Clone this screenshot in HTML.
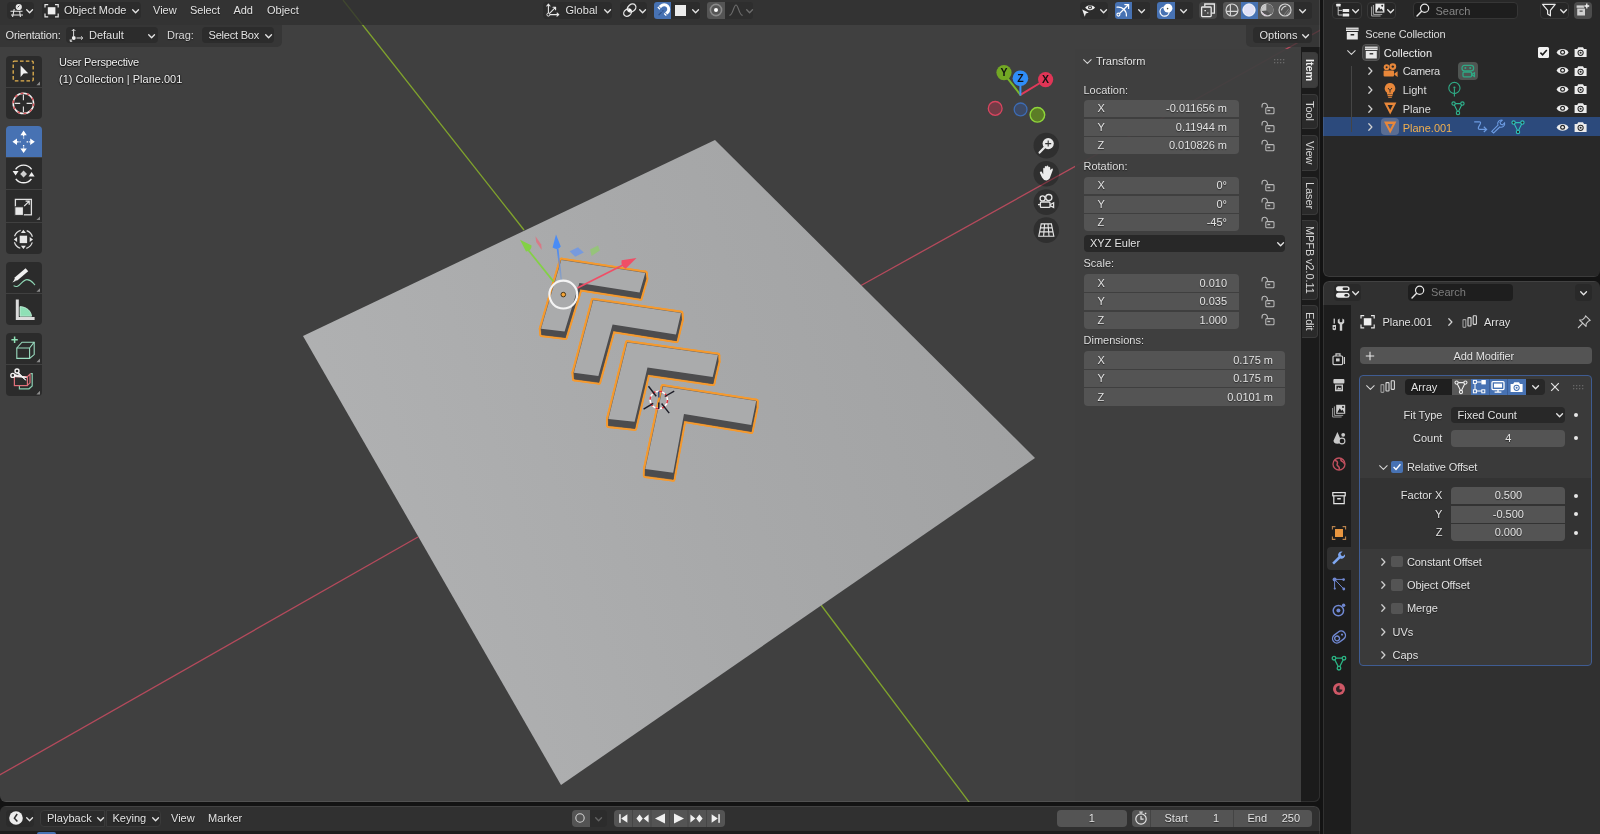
<!DOCTYPE html>
<html><head><meta charset="utf-8"><title>Blender</title>
<style>
*{box-sizing:border-box}
html,body{margin:0;padding:0}
body{width:1600px;height:834px;background:#131313;overflow:hidden;position:relative;font:11px "Liberation Sans",sans-serif;color:#e2e2e2}
.abs{position:absolute}
#vp,#tl,#ol,#pr{will-change:transform}
.t{position:absolute;white-space:nowrap;line-height:14px;height:14px}
.btn{position:absolute;background:#2a2a2a;border-radius:4px}
.fld{position:absolute;background:#545454}
.sh{text-shadow:0 1px 1px rgba(0,0,0,.55)}
svg{position:absolute;overflow:visible}
#vp{left:0;top:0;width:1320px;height:802px;background:#404040;border-radius:0 0 6px 6px;overflow:hidden}
.edge{position:absolute;left:0;top:0;right:0;bottom:0;border-radius:inherit;box-shadow:inset 0 0 0 1px rgba(255,255,255,.09);pointer-events:none}
#tl{left:0;top:806px;width:1320px;height:28px;background:#303030;border-radius:6px 6px 0 0;overflow:hidden}
#ol{left:1323px;top:0;width:277px;height:277px;background:#282828;border-radius:0 0 6px 6px;overflow:hidden}
#pr{left:1323px;top:281px;width:277px;height:553px;background:#303030;border-radius:6px 6px 0 0;overflow:hidden}
</style></head>
<body>
<!-- ================= 3D VIEWPORT ================= -->
<div id="vp" class="abs">
<svg width="1320" height="801" viewBox="0 0 1320 801" style="left:0;top:0">
<defs><linearGradient id="pg" x1="330" y1="520" x2="1000" y2="300" gradientUnits="userSpaceOnUse"><stop offset="0" stop-color="#b0b1b2"/><stop offset="0.5" stop-color="#a8a9aa"/><stop offset="1" stop-color="#a1a2a3"/></linearGradient></defs>
<g stroke-width="1.3" fill="none">
<line x1="343" y1="0" x2="524" y2="230" stroke="#80a42c"/>
<line x1="821" y1="605" x2="972" y2="806" stroke="#80a42c"/>
<line x1="-2" y1="776" x2="418" y2="537" stroke="#b54a5c"/>
<line x1="861" y1="285.5" x2="1325" y2="27.5" stroke="#b54a5c"/>
</g>
<polygon points="715,140 1035,458 561,785 303,336" fill="url(#pg)"/>
<g fill="#f59a2f" stroke="#f59a2f" stroke-width="4.6" stroke-linejoin="round">
<polygon points="561.3,260.0 645.3,272.9 639.6,292.4 579.4,283.0 564.6,331.6 541.1,328.8"/><polygon points="562.0,265.9 646.0,278.8 640.3,298.3 580.1,288.9 565.3,337.5 541.8,334.7"/>
<polygon points="561.3,260.0 645.3,272.9 646.0,278.8 562.0,265.9"/>
<polygon points="645.3,272.9 639.6,292.4 640.3,298.3 646.0,278.8"/>
<polygon points="639.6,292.4 579.4,283.0 580.1,288.9 640.3,298.3"/>
<polygon points="579.4,283.0 564.6,331.6 565.3,337.5 580.1,288.9"/>
<polygon points="564.6,331.6 541.1,328.8 541.8,334.7 565.3,337.5"/>
<polygon points="541.1,328.8 561.3,260.0 562.0,265.9 541.8,334.7"/>
</g>
<g fill="#4c4c4e" stroke="#4c4c4e" stroke-width="0.4">
<polygon points="562.0,265.9 646.0,278.8 640.3,298.3 580.1,288.9 565.3,337.5 541.8,334.7"/>
<polygon points="561.3,260.0 645.3,272.9 646.0,278.8 562.0,265.9"/>
<polygon points="645.3,272.9 639.6,292.4 640.3,298.3 646.0,278.8"/>
<polygon points="639.6,292.4 579.4,283.0 580.1,288.9 640.3,298.3"/>
<polygon points="579.4,283.0 564.6,331.6 565.3,337.5 580.1,288.9"/>
<polygon points="564.6,331.6 541.1,328.8 541.8,334.7 565.3,337.5"/>
<polygon points="541.1,328.8 561.3,260.0 562.0,265.9 541.8,334.7"/>
</g>
<polygon points="561.3,260.0 645.3,272.9 639.6,292.4 579.4,283.0 564.6,331.6 541.1,328.8" fill="#aaabac"/>
<g fill="#f59a2f" stroke="#f59a2f" stroke-width="4.6" stroke-linejoin="round">
<polygon points="593.2,300.2 681.0,313.1 676.0,334.4 612.6,324.4 598.4,376.0 573.9,372.7"/><polygon points="593.7,306.5 681.5,319.4 676.4,340.7 613.1,330.7 598.8,382.3 574.4,379.0"/>
<polygon points="593.2,300.2 681.0,313.1 681.5,319.4 593.7,306.5"/>
<polygon points="681.0,313.1 676.0,334.4 676.4,340.7 681.5,319.4"/>
<polygon points="676.0,334.4 612.6,324.4 613.1,330.7 676.4,340.7"/>
<polygon points="612.6,324.4 598.4,376.0 598.8,382.3 613.1,330.7"/>
<polygon points="598.4,376.0 573.9,372.7 574.4,379.0 598.8,382.3"/>
<polygon points="573.9,372.7 593.2,300.2 593.7,306.5 574.4,379.0"/>
</g>
<g fill="#4c4c4e" stroke="#4c4c4e" stroke-width="0.4">
<polygon points="593.7,306.5 681.5,319.4 676.4,340.7 613.1,330.7 598.8,382.3 574.4,379.0"/>
<polygon points="593.2,300.2 681.0,313.1 681.5,319.4 593.7,306.5"/>
<polygon points="681.0,313.1 676.0,334.4 676.4,340.7 681.5,319.4"/>
<polygon points="676.0,334.4 612.6,324.4 613.1,330.7 676.4,340.7"/>
<polygon points="612.6,324.4 598.4,376.0 598.8,382.3 613.1,330.7"/>
<polygon points="598.4,376.0 573.9,372.7 574.4,379.0 598.8,382.3"/>
<polygon points="573.9,372.7 593.2,300.2 593.7,306.5 574.4,379.0"/>
</g>
<polygon points="593.2,300.2 681.0,313.1 676.0,334.4 612.6,324.4 598.4,376.0 573.9,372.7" fill="#aaabac"/>
<g fill="#f59a2f" stroke="#f59a2f" stroke-width="4.6" stroke-linejoin="round">
<polygon points="627.4,342.6 717.9,355.0 712.7,377.0 647.5,367.6 634.6,421.7 608.4,418.9"/><polygon points="627.6,349.3 718.1,361.7 712.9,383.7 647.7,374.3 634.8,428.4 608.6,425.6"/>
<polygon points="627.4,342.6 717.9,355.0 718.1,361.7 627.6,349.3"/>
<polygon points="717.9,355.0 712.7,377.0 712.9,383.7 718.1,361.7"/>
<polygon points="712.7,377.0 647.5,367.6 647.7,374.3 712.9,383.7"/>
<polygon points="647.5,367.6 634.6,421.7 634.8,428.4 647.7,374.3"/>
<polygon points="634.6,421.7 608.4,418.9 608.6,425.6 634.8,428.4"/>
<polygon points="608.4,418.9 627.4,342.6 627.6,349.3 608.6,425.6"/>
</g>
<g fill="#4c4c4e" stroke="#4c4c4e" stroke-width="0.4">
<polygon points="627.6,349.3 718.1,361.7 712.9,383.7 647.7,374.3 634.8,428.4 608.6,425.6"/>
<polygon points="627.4,342.6 717.9,355.0 718.1,361.7 627.6,349.3"/>
<polygon points="717.9,355.0 712.7,377.0 712.9,383.7 718.1,361.7"/>
<polygon points="712.7,377.0 647.5,367.6 647.7,374.3 712.9,383.7"/>
<polygon points="647.5,367.6 634.6,421.7 634.8,428.4 647.7,374.3"/>
<polygon points="634.6,421.7 608.4,418.9 608.6,425.6 634.8,428.4"/>
<polygon points="608.4,418.9 627.4,342.6 627.6,349.3 608.6,425.6"/>
</g>
<polygon points="627.4,342.6 717.9,355.0 712.7,377.0 647.5,367.6 634.6,421.7 608.4,418.9" fill="#aaabac"/>
<g fill="#f59a2f" stroke="#f59a2f" stroke-width="4.6" stroke-linejoin="round">
<polygon points="663.0,386.5 756.2,401.1 751.3,425.0 684.0,414.0 673.2,472.8 645.3,469.1"/><polygon points="662.9,393.0 756.1,407.6 751.2,431.5 683.9,420.5 673.1,479.3 645.2,475.6"/>
<polygon points="663.0,386.5 756.2,401.1 756.1,407.6 662.9,393.0"/>
<polygon points="756.2,401.1 751.3,425.0 751.2,431.5 756.1,407.6"/>
<polygon points="751.3,425.0 684.0,414.0 683.9,420.5 751.2,431.5"/>
<polygon points="684.0,414.0 673.2,472.8 673.1,479.3 683.9,420.5"/>
<polygon points="673.2,472.8 645.3,469.1 645.2,475.6 673.1,479.3"/>
<polygon points="645.3,469.1 663.0,386.5 662.9,393.0 645.2,475.6"/>
</g>
<g fill="#4c4c4e" stroke="#4c4c4e" stroke-width="0.4">
<polygon points="662.9,393.0 756.1,407.6 751.2,431.5 683.9,420.5 673.1,479.3 645.2,475.6"/>
<polygon points="663.0,386.5 756.2,401.1 756.1,407.6 662.9,393.0"/>
<polygon points="756.2,401.1 751.3,425.0 751.2,431.5 756.1,407.6"/>
<polygon points="751.3,425.0 684.0,414.0 683.9,420.5 751.2,431.5"/>
<polygon points="684.0,414.0 673.2,472.8 673.1,479.3 683.9,420.5"/>
<polygon points="673.2,472.8 645.3,469.1 645.2,475.6 673.1,479.3"/>
<polygon points="645.3,469.1 663.0,386.5 662.9,393.0 645.2,475.6"/>
</g>
<polygon points="663.0,386.5 756.2,401.1 751.3,425.0 684.0,414.0 673.2,472.8 645.3,469.1" fill="#aaabac"/>
<g transform="translate(658.8,399.9)">
<circle r="8.7" fill="none" stroke="#fff" stroke-width="1.6"/>
<circle r="8.7" fill="none" stroke="#e0323c" stroke-width="1.6" stroke-dasharray="3.4 3.4"/>
<g stroke="#1c1c26" stroke-width="1.4">
<line x1="-10.3" y1="-13.6" x2="-2.6" y2="-3.6"/><line x1="2.8" y1="3.6" x2="10.4" y2="13.2"/>
<line x1="-15.2" y1="9.2" x2="-5.6" y2="3.4"/><line x1="6" y1="-3.4" x2="15.4" y2="-8.8"/>
<line x1="0" y1="-8.4" x2="0" y2="-2.4" stroke="#2a4a8a"/><line x1="0" y1="2.6" x2="0" y2="9.2"/>
</g></g>
<g>
<defs><linearGradient id="zb" x1="0" y1="280" x2="0" y2="250" gradientUnits="userSpaceOnUse"><stop offset="0" stop-color="#4d8af0" stop-opacity="0.25"/><stop offset="1" stop-color="#4d8af0" stop-opacity="1"/></linearGradient></defs>
<line x1="561.4" y1="281" x2="557.6" y2="249" stroke="url(#zb)" stroke-width="1.7"/>
<path d="M556.0,234.6 L560.8,246.5 Q557.5,251 552.6,247.6 Z" fill="#4a8cf5"/>
<line x1="553.6" y1="281.6" x2="527" y2="248.5" stroke="#83d145" stroke-width="1.7"/>
<path d="M520.0,239.8 L531.6,245.6 Q531.5,251 526.0,251.6 Z" fill="#83d145"/>
<line x1="577.4" y1="288" x2="625" y2="264" stroke="#f04e66" stroke-width="1.7"/>
<path d="M636.5,258.0 L625.6,268.8 Q620.5,266 621.6,260.2 Z" fill="#f04e66"/>
<path d="M535.5,236.2 L541.2,244.5 L541.8,250 L536.2,242 Z" fill="#e0717f" opacity="0.85"/>
<path d="M569.6,251.2 L578.0,247.2 L583.8,252.4 L575.2,256.8 Z" fill="#6f98e6" opacity="0.85"/>
<path d="M590.0,249.6 L598.0,245.4 L599.8,250.6 L591.6,256.0 Z" fill="#93c872" opacity="0.85"/>
<circle cx="563.3" cy="294.6" r="13.9" fill="none" stroke="#f4f4f4" stroke-width="2.2"/>
<circle cx="563.3" cy="294.6" r="2.3" fill="#f5a436" stroke="#3a2a10" stroke-width="0.9"/>
</g>
</svg>
<svg width="0" height="0" style="left:0;top:0"><defs>
<path id="chv" d="M0.7,0.8 L3.6,3.7 L6.5,0.8" fill="none" stroke="#e4e4e4" stroke-width="1.35" stroke-linecap="round" stroke-linejoin="round"/>
<path id="chr" d="M0.8,0.7 L3.9,4 L0.8,7.3" fill="none" stroke="#d0d0d0" stroke-width="1.25" stroke-linecap="round" stroke-linejoin="round"/>
<path id="chvt" d="M0.6,0.7 L4.4,4.4 L8.2,0.7" fill="none" stroke="#d8d8d8" stroke-width="1.05" stroke-linecap="round" stroke-linejoin="round"/>
</defs></svg>
<!-- header row 1 -->
<div class="abs" style="left:0;top:0;width:1320px;height:24.5px;background:rgba(47,47,47,.8)"></div>
<!-- tool settings row backgrounds -->
<div class="abs" style="left:0;top:24.5px;width:282px;height:22px;background:rgba(50,50,50,.72);border-radius:0 0 5px 0"></div>
<div class="abs" style="left:1246px;top:24.5px;width:74px;height:22px;background:rgba(50,50,50,.72);border-radius:0 0 0 5px"></div>

<!-- editor type -->
<div class="btn" style="left:7px;top:2px;width:26.5px;height:16.5px;background:#2c2c2c"></div>
<svg width="16" height="16" viewBox="0 0 16 16" style="left:9px;top:2px"><g fill="none" stroke="#e6e6e6" stroke-width="1.1"><path d="M1.5,9.2 H13.5 M2,13 H14 M5.2,7 L3.6,15 M10.6,9 L11.4,15"/></g><circle cx="9.8" cy="5" r="3.1" fill="#e6e6e6"/><path d="M8.6,5.4 L10.4,3.6" stroke="#333" stroke-width="0.9"/></svg>
<svg width="8" height="5" style="left:26px;top:8.5px"><use href="#chv"/></svg>

<!-- object mode -->
<div class="btn" style="left:42px;top:2px;width:98.5px;height:16.5px;background:#2c2c2c"></div>
<svg width="16" height="16" viewBox="0 0 16 16" style="left:43.5px;top:2.5px"><g fill="none" stroke="#e6e6e6" stroke-width="1.2"><path d="M1,4.6 V1.6 H4.2 M11,1.6 H14.2 V4.6 M14.2,10.6 V13.8 H11 M4.2,13.8 H1 V10.6"/></g><rect x="3.8" y="4.2" width="7.6" height="7.2" fill="#efefef"/></svg>
<div class="t sh" style="left:64px;top:3.4px">Object Mode</div>
<svg width="8" height="5" style="left:131.5px;top:8.5px"><use href="#chv"/></svg>

<div class="t sh" style="left:153px;top:3.4px">View</div>
<div class="t sh" style="left:190px;top:3.4px;letter-spacing:-.1px">Select</div>
<div class="t sh" style="left:233.5px;top:3.4px;letter-spacing:-.15px">Add</div>
<div class="t sh" style="left:267px;top:3.4px">Object</div>

<!-- row 2 -->
<div class="t sh" style="left:5.5px;top:28px;letter-spacing:-.15px">Orientation:</div>
<div class="btn" style="left:66px;top:27px;width:91.5px;height:16px;background:#2c2c2c"></div>
<svg width="16" height="16" viewBox="0 0 16 16" style="left:68.5px;top:27px"><g fill="none" stroke="#d8d8d8" stroke-width="1"><path d="M4.6,9 V2.4 M2.8,4 L4.6,2.2 L6.4,4 M7.5,11 H13.6 M12,9.3 L13.8,11 L12,12.7 M3,12.6 L1.2,14.2 M1.2,12.4 V14.3 H3.2"/></g><circle cx="4.8" cy="11" r="1.9" fill="#f0f0f0"/></svg>
<div class="t sh" style="left:89px;top:28px">Default</div>
<svg width="8" height="5" style="left:148px;top:33.5px"><use href="#chv"/></svg>
<div class="t sh" style="left:167px;top:28px;color:#d8d8d8">Drag:</div>
<div class="btn" style="left:202px;top:27px;width:71.5px;height:16px;background:#2c2c2c"></div>
<div class="t sh" style="left:208.5px;top:28px;letter-spacing:-.2px">Select Box</div>
<svg width="8" height="5" style="left:265px;top:33.5px"><use href="#chv"/></svg>

<!-- center: global -->
<div class="btn" style="left:543px;top:2px;width:69px;height:16.5px;background:#2c2c2c"></div>
<svg width="16" height="16" viewBox="0 0 16 16" style="left:545px;top:2px"><g fill="none" stroke="#e6e6e6" stroke-width="1.1" stroke-linecap="round" stroke-linejoin="round"><path d="M3.4,12.6 V2.4 M1.8,4 L3.4,2.2 L5,4 M3.4,12.6 H13.6 M12,11 L13.8,12.6 L12,14.2 M3.6,12.4 L10.4,5.4 M8,5.2 H10.6 V7.8"/></g><circle cx="3.4" cy="12.6" r="1.5" fill="#2c2c2c" stroke="#e6e6e6" stroke-width="1"/></svg>
<div class="t sh" style="left:565.5px;top:3.4px;letter-spacing:.05px">Global</div>
<svg width="8" height="5" style="left:604px;top:8.5px"><use href="#chv"/></svg>
<!-- pivot -->
<div class="btn" style="left:619.5px;top:2px;width:27.5px;height:16.5px;background:#2c2c2c"></div>
<svg width="16" height="16" viewBox="0 0 16 16" style="left:621.5px;top:2px"><g fill="none" stroke="#e6e6e6" stroke-width="1.3"><ellipse cx="9.6" cy="6" rx="4.6" ry="3.6" transform="rotate(-38 9.6 6)"/><ellipse cx="5.6" cy="10.6" rx="4.2" ry="3.3" transform="rotate(-38 5.6 10.6)"/></g><circle cx="7.6" cy="8.2" r="1.5" fill="#fff"/></svg>
<svg width="8" height="5" style="left:639px;top:8.5px"><use href="#chv"/></svg>
<!-- snap -->
<div class="abs" style="left:654px;top:2px;width:17px;height:16.5px;background:#4772b3;border-radius:3px 0 0 3px"></div>
<svg width="16" height="16" viewBox="0 0 16 16" style="left:654.5px;top:2.3px"><path d="M3.4,6.6 L6,4 A4.5,4.5 0 0 1 12.4,4 A4.5,4.5 0 0 1 12.4,10.4 L9.8,13" fill="none" stroke="#fff" stroke-width="3"/><path d="M3.3,4 L6,6.7 M9.7,10.4 L12.4,13.1" stroke="#4772b3" stroke-width="1"/><path d="M6.6,10.2 L3.6,13.2 M8.4,8.4 L7.4,9.4" stroke="#2d4f86" stroke-width="1.2"/></svg>
<div class="abs" style="left:671px;top:2px;width:29px;height:16.5px;background:#2c2c2c;border-radius:0 3px 3px 0"></div>
<div class="abs" style="left:675px;top:5px;width:11px;height:11px;background:#ececec"></div>
<svg width="8" height="5" style="left:691.5px;top:8.5px"><use href="#chv"/></svg>
<!-- proportional -->
<div class="abs" style="left:707px;top:2px;width:18px;height:16.5px;background:#555;border-radius:3px 0 0 3px"></div>
<svg width="16" height="16" viewBox="0 0 16 16" style="left:708px;top:2.2px"><circle cx="8" cy="8" r="5.6" fill="none" stroke="#8a8a8a" stroke-width="1.6"/><circle cx="8" cy="8" r="2" fill="#fff"/></svg>
<div class="abs" style="left:725px;top:2px;width:28px;height:16.5px;background:#2e2e2e;border-radius:0 3px 3px 0"></div>
<svg width="16" height="16" viewBox="0 0 16 16" style="left:727.5px;top:2px"><path d="M1.4,13.4 C5,13.4 5.6,3 8,3 C10.4,3 11,13.4 14.6,13.4" fill="none" stroke="#6c6c6c" stroke-width="1.2"/></svg>
<svg width="8" height="5" style="left:745.5px;top:8.5px;opacity:.35"><use href="#chv"/></svg>

<!-- right: visibility -->
<div class="btn" style="left:1080px;top:2px;width:28px;height:16.5px;background:#2c2c2c"></div>
<svg width="16" height="16" viewBox="0 0 16 16" style="left:1081px;top:2px"><path d="M4.2,5.8 C6,2.6 11,2.2 14,5.6 C11.4,9 7.4,9.4 4.2,5.8 Z" fill="#f0f0f0"/><circle cx="9" cy="5.4" r="1.9" fill="#2c2c2c"/><circle cx="9" cy="5.4" r="0.9" fill="#f0f0f0"/><path d="M1.2,7.6 L7.8,10.6 L4.8,11.6 L3.8,14.8 Z" fill="#f0f0f0"/></svg>
<svg width="8" height="5" style="left:1099.5px;top:8.5px"><use href="#chv"/></svg>
<!-- gizmo -->
<div class="abs" style="left:1114.5px;top:2px;width:17.5px;height:16.5px;background:#4772b3;border-radius:3px 0 0 3px"></div>
<svg width="16" height="16" viewBox="0 0 16 16" style="left:1115px;top:2.2px"><g fill="none" stroke="#fff" stroke-width="1.2" stroke-linecap="round"><path d="M3.8,12.2 L13.4,2.8 M9.8,2.6 H13.6 V6.4"/><path d="M2,5.2 C7.2,4.4 11.8,8.4 11.4,14"/></g><circle cx="3.4" cy="12.6" r="1.5" fill="#4772b3" stroke="#fff" stroke-width="1.1"/></svg>
<div class="abs" style="left:1132px;top:2px;width:18px;height:16.5px;background:#2c2c2c;border-radius:0 3px 3px 0"></div>
<svg width="8" height="5" style="left:1137.5px;top:8.5px"><use href="#chv"/></svg>
<!-- overlay -->
<div class="abs" style="left:1157px;top:2px;width:17.5px;height:16.5px;background:#4772b3;border-radius:3px 0 0 3px"></div>
<svg width="16" height="16" viewBox="0 0 16 16" style="left:1157.5px;top:2.2px"><circle cx="6.6" cy="9.6" r="4.6" fill="none" stroke="#fff" stroke-width="1.2"/><circle cx="10" cy="6.2" r="4.4" fill="#fff"/><circle cx="9.6" cy="6.6" r="0.8" fill="#4a4a3a"/></svg>
<div class="abs" style="left:1174.5px;top:2px;width:18px;height:16.5px;background:#2c2c2c;border-radius:0 3px 3px 0"></div>
<svg width="8" height="5" style="left:1180px;top:8.5px"><use href="#chv"/></svg>
<!-- xray -->
<div class="btn" style="left:1199px;top:2px;width:17.5px;height:16.5px;background:#484848"></div>
<svg width="16" height="16" viewBox="0 0 16 16" style="left:1199.8px;top:2.2px"><g fill="none" stroke="#e8e8e8" stroke-width="1.3"><rect x="1.6" y="5" width="9.6" height="9.6" rx="0.8"/><path d="M4.8,4.6 V2 H14.4 V11.2 H11.6"/></g><path d="M4.4,8 h1.6 v1.2 h-1.6z M7,10.4 h1.6 v1.2 H7z" fill="#ddd"/></svg>
<!-- shading -->
<div class="abs" style="left:1223px;top:2px;width:17.5px;height:16.5px;background:#555;border-radius:3px 0 0 3px"></div>
<svg width="16" height="16" viewBox="0 0 16 16" style="left:1223.8px;top:2.2px"><g fill="none" stroke="#d6d6d6" stroke-width="1.15"><circle cx="8" cy="8" r="6"/><path d="M2.2,9.4 H13.8 M6.4,2.4 V13.6"/></g></svg>
<div class="abs" style="left:1240.5px;top:2px;width:17.5px;height:16.5px;background:#4772b3"></div>
<svg width="16" height="16" viewBox="0 0 16 16" style="left:1241.3px;top:2.2px"><circle cx="8" cy="8" r="6.1" fill="#dfe0f6" stroke="#fff" stroke-width="1"/></svg>
<div class="abs" style="left:1258px;top:2px;width:18px;height:16.5px;background:#555"></div>
<svg width="16" height="16" viewBox="0 0 16 16" style="left:1259px;top:2.2px"><circle cx="8" cy="8" r="6" fill="none" stroke="#d6d6d6" stroke-width="1.15"/><path d="M7.4,2 V8.6 L12.4,12.4 A6,6 0 0 0 7.4,2 Z" fill="#6a6a6a"/><path d="M2.2,9 Q5,12.6 9,13.6 Q4,14.6 2.2,9 Z" fill="#e0d0e0"/><path d="M7.4,2.4 V8.4 L2.6,9 A6,6 0 0 1 7.4,2.4Z" fill="#dcdcdc" opacity=".85"/></svg>
<div class="abs" style="left:1276px;top:2px;width:17.5px;height:16.5px;background:#555;border-radius:0"></div>
<svg width="16" height="16" viewBox="0 0 16 16" style="left:1276.6px;top:2.2px"><circle cx="8" cy="8" r="6" fill="none" stroke="#d6d6d6" stroke-width="1.15"/><path d="M4.4,8.4 Q5.4,4.6 9.4,4" fill="none" stroke="#d6d6d6" stroke-width="1.2"/><path d="M9,13.4 L13,8.2 M6.8,13.2 L12,6.6 M11,12.4 L13.4,9.6" stroke="#909090" stroke-width=".7"/></svg>
<div class="abs" style="left:1293.5px;top:2px;width:18.5px;height:16.5px;background:#2c2c2c;border-radius:0 3px 3px 0"></div>
<svg width="8" height="5" style="left:1299px;top:8.5px"><use href="#chv"/></svg>

<!-- options -->
<div class="btn" style="left:1253px;top:27px;width:58.5px;height:16px;background:#2c2c2c"></div>
<div class="t sh" style="left:1259.5px;top:28px">Options</div>
<svg width="8" height="5" style="left:1301.5px;top:33.5px"><use href="#chv"/></svg>

<!-- viewport text -->
<div class="t" style="left:59px;top:54.8px;text-shadow:0 0 2px rgba(0,0,0,.8),0 1px 1px rgba(0,0,0,.6);letter-spacing:-.25px;color:#f0f0f0">User Perspective</div>
<div class="t" style="left:59px;top:71.8px;text-shadow:0 0 2px rgba(0,0,0,.8),0 1px 1px rgba(0,0,0,.6);color:#f0f0f0">(1) Collection | Plane.001</div>

<!-- toolbar buttons -->
<div class="abs" style="left:6px;top:55.5px;width:35.5px;height:31.3px;background:#2b2b2b;border-radius:4px 4px 0 0"></div>
<div class="abs" style="left:6px;top:87.7px;width:35.5px;height:31.3px;background:#2b2b2b;border-radius:0 0 4px 4px"></div>
<div class="abs" style="left:6px;top:126px;width:35.5px;height:31.3px;background:#4772b3;border-radius:4px 4px 0 0"></div>
<div class="abs" style="left:6px;top:158.1px;width:35.5px;height:31.3px;background:#2b2b2b"></div>
<div class="abs" style="left:6px;top:190.3px;width:35.5px;height:31.3px;background:#2b2b2b"></div>
<div class="abs" style="left:6px;top:222.5px;width:35.5px;height:31.8px;background:#2b2b2b;border-radius:0 0 4px 4px"></div>
<div class="abs" style="left:6px;top:262px;width:35.5px;height:31.3px;background:#2b2b2b;border-radius:4px 4px 0 0"></div>
<div class="abs" style="left:6px;top:294.2px;width:35.5px;height:31.3px;background:#2b2b2b;border-radius:0 0 4px 4px"></div>
<div class="abs" style="left:6px;top:332.5px;width:35.5px;height:31.3px;background:#2b2b2b;border-radius:4px 4px 0 0"></div>
<div class="abs" style="left:6px;top:364.7px;width:35.5px;height:31.3px;background:#2b2b2b;border-radius:0 0 4px 4px"></div>
<svg width="42" height="400" viewBox="0 0 42 400" style="left:0;top:0">
<!-- corner triangles -->
<g fill="#8c8c8c"><path d="M40,81.6 v3.6 h-3.6z M40,216.4 v3.6 h-3.6z M40,288.2 v3.6 h-3.6z M40,358.6 v3.6 h-3.6z M40,390.8 v3.6 h-3.6z"/></g>
<!-- select box -->
<rect x="13.2" y="61.2" width="20" height="19.6" rx="1" fill="none" stroke="#e6b450" stroke-width="1.3" stroke-dasharray="3.6 2.2"/>
<path d="M20.6,65.6 L28.2,73.2 L23.6,73.4 L20.6,77 Z" fill="#f0f0f0"/>
<!-- cursor -->
<circle cx="23.4" cy="103.4" r="10.2" fill="none" stroke="#f2f2f2" stroke-width="1.5"/>
<circle cx="23.4" cy="103.4" r="10.2" fill="none" stroke="#d7545a" stroke-width="1.5" stroke-dasharray="3 3.4"/>
<path d="M23.4,94.6 v5.6 M23.4,106.6 v5.6 M14.6,103.4 h5.6 M26.6,103.4 h5.6" stroke="#e2e2e2" stroke-width="1.1"/>
<!-- move -->
<g fill="#fff"><path d="M23.6,130.6 l3.2,4.6 h-6.4z M23.6,153 l3.2,-4.6 h-6.4z M12.4,141.8 l4.6,-3.2 v6.4z M34.8,141.8 l-4.6,-3.2 v6.4z"/></g>
<path d="M23.6,135 v3.6 M23.6,145 v3.6 M17,141.8 h3.6 M26.6,141.8 h3.6" stroke="#fff" stroke-width="1.3" stroke-dasharray="1.6 1"/>
<!-- rotate -->
<g fill="none" stroke="#f0f0f0" stroke-width="1.4"><path d="M15.6,169.4 A9.6,9.6 0 0 1 31.6,169.4"/><path d="M31.4,178.8 A9.6,9.6 0 0 1 15.8,178.8"/></g>
<path d="M12.6,171 h6 l-3,4.6z M28.6,176.6 h6 l-3,-4.6z" fill="#f0f0f0"/>
<path d="M23.6,170.4 l3.4,3.6 l-3.4,3.6 l-3.4,-3.6z" fill="#cfcfcf"/>
<!-- scale -->
<rect x="15.4" y="199.4" width="16" height="15.4" fill="none" stroke="#e0e0e0" stroke-width="1.3"/>
<rect x="14.8" y="206.8" width="8.6" height="8.6" fill="#e8e8e8" stroke="#2b2b2b" stroke-width="1"/>
<path d="M24.2,206.2 L29,201.4 M25.6,201.2 h3.6 v3.6" fill="none" stroke="#e8e8e8" stroke-width="1.2"/>
<!-- transform -->
<circle cx="23.4" cy="239.4" r="9.4" fill="none" stroke="#dedede" stroke-width="1.2" stroke-dasharray="8.6 6.165" stroke-dashoffset="-3.08"/>
<rect x="19.7" y="235.7" width="7.4" height="7.4" fill="#e6e6e6"/>
<path d="M23.4,229.8 l2.5,3.3 h-5z M23.4,249 l2.5,-3.3 h-5z M13.8,239.4 l3.3,-2.5 v5z M33,239.4 l-3.3,-2.5 v5z" fill="#e6e6e6"/>
<!-- annotate -->
<path d="M14,281 L15,277.2 L25.6,268.2 L28.2,271.2 L17.6,280.2 Z" fill="#f0f0f0"/><path d="M12.4,282.4 L14.6,279.6 L15.6,281 Z" fill="#f0f0f0"/>
<path d="M13.6,285.6 C19,289.6 21.6,279.6 27,279.6 C31.6,279.6 33,283.2 35,285" fill="none" stroke="#8fd6b4" stroke-width="1.1"/>
<!-- measure -->
<path d="M15.8,299.4 h3 v17.6 h15.8 v3 h-18.8z" fill="#dcdcdc"/>
<path d="M20,316.2 V306.6 C26.4,306.8 31,310.8 31.6,316.2 Z" fill="#8fe0b6" stroke="#c8f0dc" stroke-width=".8"/>
<!-- add cube -->
<path d="M14.6,336.6 v6.4 M11.4,339.8 h6.4" stroke="#8fe0b6" stroke-width="1.5"/>
<g fill="none" stroke="#9adcc0" stroke-width="1.1"><path d="M16.8,348 L22,342.2 H34.2 V354.6 L29.6,358.4 H16.8 Z"/><path d="M16.8,348 H29.6 V358.4 M29.6,348 L34.2,342.2"/></g>
<!-- rip/shear -->
<g fill="none" stroke-width="1.2"><path d="M19.4,385.8 v3 h9.6 l3.2,-2.8 v-12.4 h-1.6" stroke="#8ccfb2"/><rect x="14.4" y="376.6" width="13" height="9" stroke="#e0707a"/><path d="M27.4,376.6 l2.6,-2.4 v8.6 l-2.6,2.6" stroke="#e0707a"/></g>
<g fill="none" stroke="#f4f4f4" stroke-width="1.4"><circle cx="12.8" cy="375.4" r="2"/><circle cx="17" cy="371" r="2"/></g>
<path d="M14.6,374.6 L26.6,377.4 L15.4,376.6 Z M18.4,372.4 L25.8,380.2 L17.6,373.4 Z" fill="#f4f4f4" stroke="#f4f4f4" stroke-width=".9" stroke-linejoin="round"/>
</svg>

<svg width="120" height="200" viewBox="960 50 120 200" style="left:960px;top:50px;font:bold 10.5px 'Liberation Sans',sans-serif">
<!-- negative axes -->
<circle cx="995.2" cy="108.4" r="6.9" fill="#743b46" stroke="#d8455f" stroke-width="1.3"/>
<circle cx="1020.6" cy="109.4" r="6.4" fill="#3c4a66" stroke="#3d6cb4" stroke-width="1.3"/>
<!-- axis lines -->
<g stroke-width="2" stroke-linecap="round"><line x1="1020.4" y1="94.8" x2="1040" y2="83" stroke="#e03a5a"/><line x1="1020.4" y1="94.8" x2="1007.4" y2="78.2" stroke="#79b52b"/><line x1="1020.4" y1="94.8" x2="1020.4" y2="84" stroke="#3c90f5"/></g>
<circle cx="1037.4" cy="114.8" r="7.3" fill="#5c7d26" stroke="#8fd63a" stroke-width="1.4"/>
<circle cx="1004" cy="72.6" r="7.6" fill="#72a724"/>
<circle cx="1045.6" cy="79.6" r="7.6" fill="#e03556"/>
<circle cx="1020.4" cy="78.2" r="7.8" fill="#2f8df8"/>
<g fill="#111" text-anchor="middle"><text x="1004" y="76.4">Y</text><text x="1045.6" y="83.4">X</text><text x="1020.4" y="82">Z</text></g>
<!-- nav buttons -->
<g fill="rgba(16,16,16,.34)"><circle cx="1046.3" cy="145.6" r="12.8"/><circle cx="1046.3" cy="173.8" r="12.8"/><circle cx="1046.3" cy="202.1" r="12.8"/><circle cx="1046.3" cy="230.1" r="12.8"/></g>
<!-- zoom -->
<circle cx="1048.2" cy="143.6" r="5.6" fill="#e8e8e8"/><path d="M1044.2,147.8 L1039.6,152.6" stroke="#e8e8e8" stroke-width="2.2" stroke-linecap="round"/><path d="M1048.2,140.6 v6 M1045.2,143.6 h6" stroke="#333" stroke-width="1.1"/>
<!-- hand -->
<path d="M1041.6,171.6 L1043.2,174.2 V168.4 Q1044,167.2 1044.8,168.4 V166.6 Q1045.8,165.4 1046.6,166.6 V166.2 Q1047.6,165 1048.4,166.2 V167.2 Q1049.4,166.2 1050.2,167.4 V170 L1052,168.6 Q1053.4,168.6 1052.8,170 L1050.4,176.6 Q1049.4,180.4 1046.4,180.4 Q1043.4,180.4 1042,177.6 L1039.8,172.8 Q1040.2,171 1041.6,171.6 Z" fill="#ececec"/>
<!-- camera -->
<g fill="none" stroke="#e4e4e4" stroke-width="1.3"><circle cx="1042.6" cy="198.4" r="2.5"/><circle cx="1048.8" cy="197.6" r="3.1"/><rect x="1040.4" y="202" width="9.6" height="5.4" rx="1"/><path d="M1050,204.8 l3.6,-2 v4.6 l-3.6,-1.8"/><path d="M1040.2,204.6 h-2.2"/></g>
<!-- grid -->
<g fill="none" stroke="#e4e4e4" stroke-width="1.15"><path d="M1041.2,223.8 H1051.4 L1053.8,236.2 H1038.8 Z M1044.6,223.8 L1043.6,236.2 M1048,223.8 L1049,236.2 M1040.4,227.8 H1052.2 M1039.6,231.8 H1053"/></g>
</svg>

<div class="abs" style="left:1074.5px;top:48.5px;width:227px;height:753px;background:rgba(63,63,63,.95)"></div>
<div class="abs" style="left:1301px;top:46.5px;width:19px;height:756px;background:#1b1b1b"></div>
<div class="abs" style="left:1301.5px;top:51.5px;width:16.5px;height:36.5px;background:#3d3d3d;border-radius:0 4px 4px 0;border:1px solid #3a3a3a;border-left:none"></div>
<div class="abs" style="left:1301.5px;top:51.5px;width:16.5px;height:36.5px;display:flex;align-items:center;justify-content:center"><span style="writing-mode:vertical-rl;white-space:nowrap;font-size:11px;line-height:16px;color:#f0f0f0;font-weight:bold;letter-spacing:-.1px">Item</span></div>
<div class="abs" style="left:1301.5px;top:94px;width:16.5px;height:34.5px;background:#2a2a2a;border-radius:0 4px 4px 0;border:1px solid #3a3a3a;border-left:none"></div>
<div class="abs" style="left:1301.5px;top:94px;width:16.5px;height:34.5px;display:flex;align-items:center;justify-content:center"><span style="writing-mode:vertical-rl;white-space:nowrap;font-size:11px;line-height:16px;color:#d6d6d6;font-weight:normal;letter-spacing:-.1px">Tool</span></div>
<div class="abs" style="left:1301.5px;top:134.5px;width:16.5px;height:36.5px;background:#2a2a2a;border-radius:0 4px 4px 0;border:1px solid #3a3a3a;border-left:none"></div>
<div class="abs" style="left:1301.5px;top:134.5px;width:16.5px;height:36.5px;display:flex;align-items:center;justify-content:center"><span style="writing-mode:vertical-rl;white-space:nowrap;font-size:11px;line-height:16px;color:#d6d6d6;font-weight:normal;letter-spacing:-.1px">View</span></div>
<div class="abs" style="left:1301.5px;top:176.5px;width:16.5px;height:38px;background:#2a2a2a;border-radius:0 4px 4px 0;border:1px solid #3a3a3a;border-left:none"></div>
<div class="abs" style="left:1301.5px;top:176.5px;width:16.5px;height:38px;display:flex;align-items:center;justify-content:center"><span style="writing-mode:vertical-rl;white-space:nowrap;font-size:11px;line-height:16px;color:#d6d6d6;font-weight:normal;letter-spacing:-.1px">Laser</span></div>
<div class="abs" style="left:1301.5px;top:220px;width:16.5px;height:80px;background:#2a2a2a;border-radius:0 4px 4px 0;border:1px solid #3a3a3a;border-left:none"></div>
<div class="abs" style="left:1301.5px;top:220px;width:16.5px;height:80px;display:flex;align-items:center;justify-content:center"><span style="writing-mode:vertical-rl;white-space:nowrap;font-size:11px;line-height:16px;color:#d6d6d6;font-weight:normal;letter-spacing:-.1px">MPFB v2.0.11</span></div>
<div class="abs" style="left:1301.5px;top:304.5px;width:16.5px;height:33px;background:#2a2a2a;border-radius:0 4px 4px 0;border:1px solid #3a3a3a;border-left:none"></div>
<div class="abs" style="left:1301.5px;top:304.5px;width:16.5px;height:33px;display:flex;align-items:center;justify-content:center"><span style="writing-mode:vertical-rl;white-space:nowrap;font-size:11px;line-height:16px;color:#d6d6d6;font-weight:normal;letter-spacing:-.1px">Edit</span></div>
<svg width="10" height="6" style="left:1083px;top:59.2px"><use href="#chvt"/></svg>
<div class="t sh" style="left:1096px;top:54.3px;letter-spacing:-.05px">Transform</div>
<svg width="12" height="6" viewBox="0 0 12 6" style="left:1273.5px;top:59px"><g fill="#6a6a6a"><rect x="0" y="0" width="1.3" height="1.3"/><rect x="3" y="0" width="1.3" height="1.3"/><rect x="6" y="0" width="1.3" height="1.3"/><rect x="9" y="0" width="1.3" height="1.3"/><rect x="0" y="3" width="1.3" height="1.3"/><rect x="3" y="3" width="1.3" height="1.3"/><rect x="6" y="3" width="1.3" height="1.3"/><rect x="9" y="3" width="1.3" height="1.3"/></g></svg>
<div class="t sh" style="left:1083.5px;top:82.6px;color:#dedede">Location:</div>
<div class="fld" style="left:1083.5px;top:100.00px;width:155.5px;height:17.4px;border-radius:4px 4px 0 0"></div>
<div class="t sh" style="left:1097.5px;top:101.20px">X</div>
<div class="t sh" style="right:93.0px;top:101.20px;text-align:right">-0.011656 m</div>
<svg width="16" height="14" viewBox="0 0 16 14" style="left:1259.5px;top:101.60px"><g fill="none" stroke="#bababa" stroke-width="1.05"><rect x="5.8" y="5.6" width="8.2" height="6.2" rx="1"/><path d="M7.4,5.4 V4 A2.7,2.7 0 0 0 2,4 V5.6"/></g><rect x="7.4" y="7.8" width="2.8" height="1.4" fill="#bdbdbd"/></svg>
<div class="fld" style="left:1083.5px;top:118.55px;width:155.5px;height:17.4px;border-radius:0"></div>
<div class="t sh" style="left:1097.5px;top:119.75px">Y</div>
<div class="t sh" style="right:93.0px;top:119.75px;text-align:right">0.11944 m</div>
<svg width="16" height="14" viewBox="0 0 16 14" style="left:1259.5px;top:120.15px"><g fill="none" stroke="#bababa" stroke-width="1.05"><rect x="5.8" y="5.6" width="8.2" height="6.2" rx="1"/><path d="M7.4,5.4 V4 A2.7,2.7 0 0 0 2,4 V5.6"/></g><rect x="7.4" y="7.8" width="2.8" height="1.4" fill="#bdbdbd"/></svg>
<div class="fld" style="left:1083.5px;top:137.10px;width:155.5px;height:17.4px;border-radius:0 0 4px 4px"></div>
<div class="t sh" style="left:1097.5px;top:138.30px">Z</div>
<div class="t sh" style="right:93.0px;top:138.30px;text-align:right">0.010826 m</div>
<svg width="16" height="14" viewBox="0 0 16 14" style="left:1259.5px;top:138.70px"><g fill="none" stroke="#bababa" stroke-width="1.05"><rect x="5.8" y="5.6" width="8.2" height="6.2" rx="1"/><path d="M7.4,5.4 V4 A2.7,2.7 0 0 0 2,4 V5.6"/></g><rect x="7.4" y="7.8" width="2.8" height="1.4" fill="#bdbdbd"/></svg>
<div class="t sh" style="left:1083.5px;top:159px;color:#dedede">Rotation:</div>
<div class="fld" style="left:1083.5px;top:177.00px;width:155.5px;height:17.4px;border-radius:4px 4px 0 0"></div>
<div class="t sh" style="left:1097.5px;top:178.20px">X</div>
<div class="t sh" style="right:93.0px;top:178.20px;text-align:right">0°</div>
<svg width="16" height="14" viewBox="0 0 16 14" style="left:1259.5px;top:178.60px"><g fill="none" stroke="#bababa" stroke-width="1.05"><rect x="5.8" y="5.6" width="8.2" height="6.2" rx="1"/><path d="M7.4,5.4 V4 A2.7,2.7 0 0 0 2,4 V5.6"/></g><rect x="7.4" y="7.8" width="2.8" height="1.4" fill="#bdbdbd"/></svg>
<div class="fld" style="left:1083.5px;top:195.55px;width:155.5px;height:17.4px;border-radius:0"></div>
<div class="t sh" style="left:1097.5px;top:196.75px">Y</div>
<div class="t sh" style="right:93.0px;top:196.75px;text-align:right">0°</div>
<svg width="16" height="14" viewBox="0 0 16 14" style="left:1259.5px;top:197.15px"><g fill="none" stroke="#bababa" stroke-width="1.05"><rect x="5.8" y="5.6" width="8.2" height="6.2" rx="1"/><path d="M7.4,5.4 V4 A2.7,2.7 0 0 0 2,4 V5.6"/></g><rect x="7.4" y="7.8" width="2.8" height="1.4" fill="#bdbdbd"/></svg>
<div class="fld" style="left:1083.5px;top:214.10px;width:155.5px;height:17.4px;border-radius:0 0 4px 4px"></div>
<div class="t sh" style="left:1097.5px;top:215.30px">Z</div>
<div class="t sh" style="right:93.0px;top:215.30px;text-align:right">-45°</div>
<svg width="16" height="14" viewBox="0 0 16 14" style="left:1259.5px;top:215.70px"><g fill="none" stroke="#bababa" stroke-width="1.05"><rect x="5.8" y="5.6" width="8.2" height="6.2" rx="1"/><path d="M7.4,5.4 V4 A2.7,2.7 0 0 0 2,4 V5.6"/></g><rect x="7.4" y="7.8" width="2.8" height="1.4" fill="#bdbdbd"/></svg>
<div class="btn" style="left:1083.5px;top:235px;width:201.5px;height:16.5px;background:#282828"></div>
<div class="t sh" style="left:1090px;top:235.6px">XYZ Euler</div>
<svg width="8" height="5" style="left:1276.5px;top:241.5px"><use href="#chv"/></svg>
<div class="t sh" style="left:1083.5px;top:255.8px;color:#dedede">Scale:</div>
<div class="fld" style="left:1083.5px;top:274.40px;width:155.5px;height:17.4px;border-radius:4px 4px 0 0"></div>
<div class="t sh" style="left:1097.5px;top:275.60px">X</div>
<div class="t sh" style="right:93.0px;top:275.60px;text-align:right">0.010</div>
<svg width="16" height="14" viewBox="0 0 16 14" style="left:1259.5px;top:276.00px"><g fill="none" stroke="#bababa" stroke-width="1.05"><rect x="5.8" y="5.6" width="8.2" height="6.2" rx="1"/><path d="M7.4,5.4 V4 A2.7,2.7 0 0 0 2,4 V5.6"/></g><rect x="7.4" y="7.8" width="2.8" height="1.4" fill="#bdbdbd"/></svg>
<div class="fld" style="left:1083.5px;top:292.95px;width:155.5px;height:17.4px;border-radius:0"></div>
<div class="t sh" style="left:1097.5px;top:294.15px">Y</div>
<div class="t sh" style="right:93.0px;top:294.15px;text-align:right">0.035</div>
<svg width="16" height="14" viewBox="0 0 16 14" style="left:1259.5px;top:294.55px"><g fill="none" stroke="#bababa" stroke-width="1.05"><rect x="5.8" y="5.6" width="8.2" height="6.2" rx="1"/><path d="M7.4,5.4 V4 A2.7,2.7 0 0 0 2,4 V5.6"/></g><rect x="7.4" y="7.8" width="2.8" height="1.4" fill="#bdbdbd"/></svg>
<div class="fld" style="left:1083.5px;top:311.50px;width:155.5px;height:17.4px;border-radius:0 0 4px 4px"></div>
<div class="t sh" style="left:1097.5px;top:312.70px">Z</div>
<div class="t sh" style="right:93.0px;top:312.70px;text-align:right">1.000</div>
<svg width="16" height="14" viewBox="0 0 16 14" style="left:1259.5px;top:313.10px"><g fill="none" stroke="#bababa" stroke-width="1.05"><rect x="5.8" y="5.6" width="8.2" height="6.2" rx="1"/><path d="M7.4,5.4 V4 A2.7,2.7 0 0 0 2,4 V5.6"/></g><rect x="7.4" y="7.8" width="2.8" height="1.4" fill="#bdbdbd"/></svg>
<div class="t sh" style="left:1083.5px;top:332.8px;color:#dedede">Dimensions:</div>
<div class="fld" style="left:1083.5px;top:351.30px;width:201.5px;height:17.4px;border-radius:4px 4px 0 0"></div>
<div class="t sh" style="left:1097.5px;top:352.50px">X</div>
<div class="t sh" style="right:47.0px;top:352.50px;text-align:right">0.175 m</div>
<div class="fld" style="left:1083.5px;top:369.85px;width:201.5px;height:17.4px;border-radius:0"></div>
<div class="t sh" style="left:1097.5px;top:371.05px">Y</div>
<div class="t sh" style="right:47.0px;top:371.05px;text-align:right">0.175 m</div>
<div class="fld" style="left:1083.5px;top:388.40px;width:201.5px;height:17.4px;border-radius:0 0 4px 4px"></div>
<div class="t sh" style="left:1097.5px;top:389.60px">Z</div>
<div class="t sh" style="right:47.0px;top:389.60px;text-align:right">0.0101 m</div>
<div class="edge" style="top:-2px;left:-2px"></div>
</div>
<!-- ================= TIMELINE ================= -->
<div id="tl" class="abs">
<!-- coordinates relative to timeline top (806) -->
<div class="abs" style="left:0;top:24.5px;width:1320px;height:4px;background:#1e1e1e"></div>
<div class="abs" style="left:37px;top:26px;width:18.5px;height:3px;background:#4772b3;border-radius:2px 2px 0 0"></div>
<!-- editor type -->
<div class="btn" style="left:6px;top:3.5px;width:28px;height:17px;background:#2b2b2b"></div>
<svg width="16" height="16" viewBox="0 0 16 16" style="left:8px;top:4.2px"><circle cx="8" cy="8" r="6.8" fill="#ececec"/><path d="M9.2,4 L6.4,8.2 L9.4,11.6" fill="none" stroke="#2f2f2f" stroke-width="1.5"/></svg>
<svg width="8" height="5" style="left:25.5px;top:10.5px"><use href="#chv"/></svg>
<div class="btn" style="left:40px;top:3.5px;width:64.5px;height:17px;background:#2b2b2b;border:1px solid #3a3a3a;border-radius:4px 0 0 4px"></div>
<div class="t sh" style="left:47px;top:5.2px">Playback</div>
<svg width="8" height="5" style="left:96.5px;top:10.5px"><use href="#chv"/></svg>
<div class="btn" style="left:105.5px;top:3.5px;width:55px;height:17px;background:#2b2b2b;border:1px solid #3a3a3a;border-radius:0 4px 4px 0"></div>
<div class="t sh" style="left:112.5px;top:5.2px">Keying</div>
<svg width="8" height="5" style="left:152px;top:10.5px"><use href="#chv"/></svg>
<div class="t sh" style="left:171px;top:5.2px">View</div>
<div class="t sh" style="left:208px;top:5.2px">Marker</div>
<!-- record -->
<div class="abs" style="left:571.5px;top:3.5px;width:18px;height:17px;background:#545454;border-radius:4px 0 0 4px"></div>
<svg width="12" height="12" viewBox="0 0 12 12" style="left:574.3px;top:6.3px"><circle cx="6" cy="6" r="4.2" fill="none" stroke="#d0d0d0" stroke-width="1.1"/></svg>
<div class="abs" style="left:589.5px;top:3.5px;width:17.5px;height:17px;background:#2c2c2c;border-radius:0 4px 4px 0"></div>
<svg width="8" height="5" style="left:594.5px;top:10.5px;opacity:.3"><use href="#chv"/></svg>
<!-- transport -->
<div class="abs" style="left:614px;top:3.5px;width:111px;height:17px;background:#545454;border-radius:4px"></div>
<svg width="111" height="17" viewBox="0 0 111 17" style="left:614px;top:3.5px">
<g stroke="#464646" stroke-width="1"><path d="M18.5,0 V17 M37,0 V17 M55.5,0 V17 M74,0 V17 M92.5,0 V17"/></g>
<g fill="#f0f0f0">
<rect x="5.2" y="4.2" width="1.5" height="8.6"/><path d="M13.4,4.2 V12.8 L7.2,8.5 Z"/>
<path d="M22.4,8.5 l3.2,-4 l3.2,4 l-3.2,4z M34.6,4.4 V12.6 L29.6,8.5 Z"/>
<path d="M51,3.6 V13.4 L41,8.5 Z"/>
<path d="M60,3.6 V13.4 L70,8.5 Z"/>
<path d="M76.4,4.4 V12.6 L81.4,8.5 Z M82.2,8.5 l3.2,-4 l3.2,4 l-3.2,4z"/>
<path d="M97.6,4.2 V12.8 L103.8,8.5 Z"/><rect x="104.3" y="4.2" width="1.5" height="8.6"/>
</g></svg>
<!-- frame fields -->
<div class="fld" style="left:1057px;top:3.5px;width:69.5px;height:17px;border-radius:4px"></div>
<div class="t sh" style="left:1057px;top:5.2px;width:69.5px;text-align:center">1</div>
<div class="fld" style="left:1132px;top:3.5px;width:180px;height:17px;border-radius:4px"></div>
<div class="abs" style="left:1149.5px;top:3.5px;width:1px;height:17px;background:#444"></div>
<div class="abs" style="left:1232.5px;top:3.5px;width:1px;height:17px;background:#444"></div>
<svg width="16" height="16" viewBox="0 0 16 16" style="left:1132.6px;top:4px"><g fill="none" stroke="#e2e2e2" stroke-width="1.2"><circle cx="8" cy="9" r="5.2"/><path d="M8,6 V9.2 H10.6 M6.2,2 H9.8 M8,2 V3.6 M12,4 L13.2,2.8"/></g></svg>
<div class="t sh" style="left:1164.5px;top:5.2px">Start</div>
<div class="t sh" style="right:101px;top:5.2px">1</div>
<div class="t sh" style="left:1247.5px;top:5.2px">End</div>
<div class="t sh" style="right:20px;top:5.2px">250</div>

<div class="edge" style="bottom:-2px;left:-2px"></div>
</div>
<!-- ================= OUTLINER ================= -->
<div id="ol" class="abs">
<div class="abs" style="left:1px;top:0;width:276px;height:277px">
<!-- header -->
<div class="btn" style="left:8px;top:2px;width:30px;height:17px;background:#262626;border:1px solid #383838"></div>
<svg width="16" height="16" viewBox="0 0 16 16" style="left:11px;top:2.4px"><g fill="#ececec"><rect x="1.2" y="1.8" width="4.4" height="2.6" rx=".5"/><rect x="7.6" y="7" width="6.6" height="2.9" rx=".5"/><rect x="7.6" y="11.6" width="6.6" height="2.9" rx=".5"/></g><path d="M3.2,4.6 V13 H7 M3.2,8.4 H7" fill="none" stroke="#cfcfcf" stroke-width=".9"/></svg>
<svg width="8" height="5" style="left:28px;top:8.8px"><use href="#chv"/></svg>
<div class="btn" style="left:43px;top:2px;width:29px;height:17px;background:#262626;border:1px solid #383838"></div>
<svg width="16" height="16" viewBox="0 0 16 16" style="left:45.5px;top:2.4px"><path d="M1.6,4.6 V14 H10.6 M3.4,3 V12.4 H12.2" fill="none" stroke="#a8a8a8" stroke-width="1"/><rect x="5.4" y="1.6" width="9" height="9" fill="#ececec"/><path d="M6.4,9.6 L9,5 L10.6,7.6 L11.6,6.4 L13.4,9.6 Z" fill="#2a2a2a"/><circle cx="12.2" cy="3.8" r="1" fill="#2a2a2a"/></svg>
<svg width="8" height="5" style="left:62.5px;top:8.8px"><use href="#chv"/></svg>
<div class="btn" style="left:88.5px;top:2px;width:105.5px;height:17px;background:#1e1e1e;border:1px solid #363636"></div>
<svg width="16" height="16" viewBox="0 0 16 16" style="left:91px;top:2.4px"><circle cx="9.6" cy="6.2" r="4.1" fill="none" stroke="#e6e6e6" stroke-width="1.2"/><path d="M6.6,9.2 L2,14" stroke="#e6e6e6" stroke-width="1.4" stroke-linecap="round"/></svg>
<div class="t" style="left:111.5px;top:3.6px;color:#868686">Search</div>
<div class="btn" style="left:215.5px;top:2px;width:29.5px;height:17px;background:#262626;border:1px solid #383838"></div>
<svg width="16" height="16" viewBox="0 0 16 16" style="left:217px;top:2.4px"><path d="M1.6,2.4 H14.2 L9.4,8.4 V13.8 L6.6,12 V8.4 Z" fill="none" stroke="#e8e8e8" stroke-width="1.25" stroke-linejoin="round"/></svg>
<svg width="8" height="5" style="left:236px;top:8.8px"><use href="#chv"/></svg>
<div class="btn" style="left:250px;top:2px;width:18px;height:17px;background:#4c4c4c"></div>
<svg width="16" height="16" viewBox="0 0 16 16" style="left:251px;top:2.4px"><g fill="#d0d0d0"><rect x="1.6" y="3.4" width="9" height="2.4"/><path d="M2.2,6.6 h7.8 v7 h-7.8z M4.6,8.4 v1.4 h3 v-1.4z" fill-rule="evenodd"/></g><circle cx="11.8" cy="4" r="3" fill="#4c4c4c"/><path d="M11.8,1.6 v4.8 M9.4,4 h4.8" stroke="#f4f4f4" stroke-width="1.3"/></svg>
<!-- selected row -->
<div class="abs" style="left:-1px;top:117.4px;width:277px;height:18.6px;background:#2c4a7c"></div>
<!-- guide line -->
<div class="abs" style="left:27px;top:66px;width:1px;height:66px;background:#454545"></div>
<svg width="0" height="0"><defs>
<g id="coll"><rect x="1" y="1.6" width="12.6" height="3.4" fill="#e8e8e8"/><path d="M1.8,6 h11 v7.6 h-11z M5.6,8 v1.6 h3.6 v-1.6z" fill="#e8e8e8" fill-rule="evenodd"/><path d="M1,3.3 h12.6" stroke="#2a2a2a" stroke-width=".5"/></g>
<g id="eye"><path d="M0.6,5.4 C3,1 10,1 12.6,5.4 C10,9.8 3,9.8 0.6,5.4 Z" fill="#ececec"/><circle cx="6.6" cy="5.2" r="2.5" fill="#282828"/><circle cx="6.6" cy="5.2" r="1.2" fill="#ececec"/></g>
<g id="cam"><path d="M0.6,3 h2.6 l1,-1.8 h4.8 l1,1.8 h2.6 v8 h-12z" fill="#ececec"/><circle cx="6.6" cy="6.8" r="3.1" fill="#282828"/><circle cx="6.6" cy="6.8" r="2.1" fill="#ececec"/><circle cx="6.6" cy="6.8" r="1" fill="#282828"/></g>
<g id="tri"><path d="M1,1.6 H13.4 L7.2,13.4 Z M4.6,4 H9.8 L7.2,9 Z" fill="#e8873a" fill-rule="evenodd"/></g>
<g id="mesh"><g fill="none" stroke-width="1.1"><path d="M2.6,2.6 H11.4 L7,11.6 Z"/><circle cx="2.6" cy="2.6" r="1.7" fill="#282828"/><circle cx="11.4" cy="2.6" r="1.7" fill="#282828"/><circle cx="7" cy="12" r="1.7" fill="#282828"/></g></g>
</defs></svg>
<!-- Scene Collection -->
<svg width="15" height="15" viewBox="0 0 15 15" style="left:21px;top:26.4px"><use href="#coll"/></svg>
<div class="t" style="left:41.3px;top:27px;letter-spacing:-.15px;color:#dcdcdc">Scene Collection</div>
<!-- Collection -->
<svg width="10" height="6" style="left:23px;top:50px"><use href="#chvt"/></svg>
<div class="abs" style="left:37.5px;top:43.6px;width:18.5px;height:17.5px;background:#404040;border-radius:4px;border:1px solid #555"></div>
<svg width="15" height="15" viewBox="0 0 15 15" style="left:39.6px;top:45px"><use href="#coll"/></svg>
<div class="t" style="left:59.8px;top:45.6px;color:#f0f0f0">Collection</div>
<div class="abs" style="left:214px;top:47.2px;width:10.6px;height:10.6px;background:#f2f2f2;border-radius:1.5px"></div>
<svg width="11" height="11" viewBox="0 0 11 11" style="left:214px;top:47.2px"><path d="M2.4,5.6 L4.6,7.8 L8.8,3" fill="none" stroke="#1c1c1c" stroke-width="1.6"/></svg>
<!-- eyes + cams -->
<svg width="14" height="11" viewBox="0 0 14 11" style="left:231.5px;top:46.6px"><use href="#eye"/></svg>
<svg width="14" height="12" viewBox="0 0 14 12" style="left:250.3px;top:45.8px"><use href="#cam"/></svg>
<svg width="14" height="11" viewBox="0 0 14 11" style="left:231.5px;top:65.4px"><use href="#eye"/></svg>
<svg width="14" height="12" viewBox="0 0 14 12" style="left:250.3px;top:64.6px"><use href="#cam"/></svg>
<svg width="14" height="11" viewBox="0 0 14 11" style="left:231.5px;top:84.1px"><use href="#eye"/></svg>
<svg width="14" height="12" viewBox="0 0 14 12" style="left:250.3px;top:83.3px"><use href="#cam"/></svg>
<svg width="14" height="11" viewBox="0 0 14 11" style="left:231.5px;top:102.8px"><use href="#eye"/></svg>
<svg width="14" height="12" viewBox="0 0 14 12" style="left:250.3px;top:102px"><use href="#cam"/></svg>
<svg width="14" height="11" viewBox="0 0 14 11" style="left:231.5px;top:121.6px"><use href="#eye"/></svg>
<svg width="14" height="12" viewBox="0 0 14 12" style="left:250.3px;top:120.8px"><use href="#cam"/></svg>
<!-- Camera -->
<svg width="6" height="9" style="left:43.8px;top:67.2px"><use href="#chr"/></svg>
<svg width="16" height="16" viewBox="0 0 16 16" style="left:58px;top:63.4px"><g fill="#e8873a"><circle cx="4.6" cy="4.2" r="2.9"/><circle cx="10.8" cy="3.6" r="3.4"/><rect x="1.6" y="7.4" width="10.4" height="6.2" rx="1"/><path d="M12.4,10.6 l3.2,-2.4 v5.8 l-3.2,-2.2z"/></g><circle cx="4.6" cy="4.2" r="1" fill="#282828"/><circle cx="10.8" cy="3.6" r="1.2" fill="#282828"/></svg>
<div class="t" style="left:78.7px;top:64.4px;color:#dcdcdc;letter-spacing:-.35px">Camera</div>
<div class="abs" style="left:134px;top:62.4px;width:19.5px;height:17.4px;background:#4f5552;border-radius:4px"></div>
<svg width="16" height="16" viewBox="0 0 16 16" style="left:135.8px;top:63.2px"><g fill="none" stroke="#2fa884" stroke-width="1.3"><rect x="2" y="2.4" width="11.6" height="5.4" rx="2.4"/><rect x="3" y="9" width="8.6" height="4.8" rx="1"/><path d="M11.8,11.4 l2.6,-1.6 v3.6 l-2.6,-1.4"/></g><circle cx="5.4" cy="5.1" r="1" fill="#2fa884"/><circle cx="10.2" cy="5.1" r="1" fill="#2fa884"/></svg>
<!-- Light -->
<svg width="6" height="9" style="left:43.8px;top:85.9px"><use href="#chr"/></svg>
<svg width="16" height="16" viewBox="0 0 16 16" style="left:58px;top:81.8px"><path d="M8,1 A5.4,5.4 0 0 1 11,10.8 V12.4 H5 V10.8 A5.4,5.4 0 0 1 8,1 Z" fill="#e8873a"/><rect x="5.6" y="13" width="4.8" height="1.2" fill="#e8873a"/><rect x="6.2" y="14.8" width="3.6" height="1" fill="#e8873a"/><path d="M6,6 L8,8.4 L10,6 M8,8.4 V10.6" fill="none" stroke="#282828" stroke-width=".9"/></svg>
<div class="t" style="left:78.7px;top:83.1px;color:#dcdcdc">Light</div>
<svg width="16" height="16" viewBox="0 0 16 16" style="left:123px;top:81.2px"><g fill="none" stroke="#2fa884" stroke-width="1.15"><circle cx="7.4" cy="7" r="5.6"/><path d="M7.4,7.6 V15.4"/></g><circle cx="7.4" cy="6.6" r="1.1" fill="#2fa884"/></svg>
<!-- Plane -->
<svg width="6" height="9" style="left:43.8px;top:104.6px"><use href="#chr"/></svg>
<svg width="15" height="15" viewBox="0 0 15 15" style="left:58.6px;top:101.2px"><use href="#tri"/></svg>
<div class="t" style="left:78.7px;top:101.8px;color:#dcdcdc">Plane</div>
<svg width="15" height="15" viewBox="0 0 15 15" style="left:126.6px;top:101px;stroke:#2fb48e"><use href="#mesh"/></svg>
<!-- Plane.001 -->
<svg width="6" height="9" style="left:43.8px;top:123.3px"><use href="#chr"/></svg>
<div class="abs" style="left:56.5px;top:118px;width:18.5px;height:17.4px;background:#5a6d92;border-radius:4px"></div>
<svg width="15" height="15" viewBox="0 0 15 15" style="left:58.6px;top:119.9px"><use href="#tri"/></svg>
<div class="t" style="left:78.7px;top:120.5px;color:#f2b04e">Plane.001</div>
<svg width="16" height="16" viewBox="0 0 16 16" style="left:149px;top:119px"><path d="M1.2,2.8 H6.2 Q8.2,2.8 7.2,5 L5.6,8 Q4.6,10.4 7,10.4 H13.4 M10.8,7.8 L13.6,10.4 L10.8,13" fill="none" stroke="#6b9ae0" stroke-width="1.2"/></svg>
<svg width="16" height="16" viewBox="0 0 16 16" style="left:167px;top:119px"><path d="M2.2,13.8 L8.4,7.6 A3.6,3.6 0 0 1 12.6,2.6 L10.4,4.8 L11.2,6.6 L13,7.2 L15,5.2 A3.6,3.6 0 0 1 10.2,9.4 L4,15.4 Z" fill="none" stroke="#6b9ae0" stroke-width="1.1" transform="translate(-1.4,-1.4)"/></svg>
<svg width="15" height="15" viewBox="0 0 15 15" style="left:186.6px;top:119.6px;stroke:#2fc0b8"><use href="#mesh"/></svg>

</div>
<div class="edge" style="top:-2px;right:-2px"></div>
</div>
<!-- ================= PROPERTIES ================= -->
<div id="pr" class="abs">
<div class="abs" style="left:0;top:24px;width:28px;height:530px;background:#1d1d1d"></div>
<div class="abs" style="left:4px;top:265.5px;width:24px;height:23.4px;background:#303030;border-radius:4px 0 0 4px"></div>
<div class="btn" style="left:10.5px;top:3px;width:27px;height:16.5px;background:#292929"></div>
<svg width="16" height="16" viewBox="0 0 16 16" style="left:12px;top:3.2px"><g fill="#ececec"><rect x="1" y="2.2" width="13.6" height="5" rx="2.5"/><rect x="1" y="8.8" width="13.6" height="5" rx="2.5"/></g><rect x="7.6" y="3.4" width="5.6" height="2.6" rx="1.3" fill="#292929"/><rect x="9.4" y="10" width="3.8" height="2.6" rx="1.3" fill="#292929"/></svg>
<svg width="8" height="5" style="left:29px;top:9.5px"><use href="#chv"/></svg>
<div class="btn" style="left:85px;top:3px;width:105px;height:16.5px;background:#1e1e1e"></div>
<svg width="16" height="16" viewBox="0 0 16 16" style="left:87px;top:3.2px"><circle cx="9.6" cy="6.2" r="4.1" fill="none" stroke="#e6e6e6" stroke-width="1.2"/><path d="M6.6,9.2 L2,14" stroke="#e6e6e6" stroke-width="1.4" stroke-linecap="round"/></svg>
<div class="t" style="left:108px;top:4.4px;color:#7c7c7c">Search</div>
<div class="btn" style="left:252px;top:3px;width:17px;height:16.5px;background:#292929"></div>
<svg width="8" height="5" style="left:256.8px;top:9.5px"><use href="#chv"/></svg>
<svg width="16" height="16" viewBox="0 0 16 16" style="left:8px;top:36px"><g fill="#cfcfcf"><rect x="2.6" y="1.6" width="1.3" height="5"/><path d="M1.6,8 h3.4 v4.6 q-1.7,1.4 -3.4,0z"/><path d="M8.6,1.4 v3.2 l1.4,1 l1.4,-1 v-3.2 l1.8,1.4 v3 l-2,1.8 v6.2 h-2.4 v-6.2 l-2,-1.8 v-3z"/></g><circle cx="3.3" cy="10.6" r=".8" fill="#1d1d1d"/></svg>
<svg width="16" height="16" viewBox="0 0 16 16" style="left:8px;top:69.5px"><g fill="none" stroke="#cdcdcd" stroke-width="1.2"><rect x="2" y="5" width="9.6" height="8.6" rx="1"/><path d="M13.4,6 v7 M5,5 v-2.2 h4 v2.2"/></g><rect x="5" y="7.4" width="3.6" height="3" fill="#cdcdcd"/></svg>
<svg width="16" height="16" viewBox="0 0 16 16" style="left:8px;top:96px"><g fill="#cdcdcd"><rect x="2.4" y="2" width="11" height="4.4" rx="1"/><path d="M4,7.4 h8 v6.8 h-8z M5.4,8.8 v4 h5.2 v-4z" fill-rule="evenodd"/><path d="M6,12.4 l1.6,-2.4 l1,1.2 l0.8,-0.8 l1,2z"/></g></svg>
<svg width="16" height="16" viewBox="0 0 16 16" style="left:8px;top:122px"><path d="M1.6,5 V14 H10.6 M3.4,3.4 V12.4 H12.2" fill="none" stroke="#9a9a9a" stroke-width="1"/><rect x="5.2" y="1.8" width="9" height="9" fill="#cdcdcd"/><path d="M6.2,9.8 L8.8,5.2 L10.4,7.8 L11.4,6.6 L13.2,9.8 Z" fill="#1d1d1d"/><circle cx="12" cy="4" r="1" fill="#1d1d1d"/></svg>
<svg width="16" height="16" viewBox="0 0 16 16" style="left:8px;top:149px"><g fill="#c8c8c8"><path d="M6.4,2 L10.2,10.6 Q10.4,13.6 6.4,13.8 Q2.2,13.6 2.6,10.6 Z"/><circle cx="12.2" cy="4.8" r="1.9"/></g><circle cx="11" cy="11" r="2.9" fill="#1d1d1d" stroke="#c8c8c8" stroke-width="1.1"/></svg>
<svg width="16" height="16" viewBox="0 0 16 16" style="left:8px;top:175px"><circle cx="8" cy="8" r="6" fill="none" stroke="#c0505e" stroke-width="1.3"/><path d="M4,4.4 Q7,5 6.4,7.6 Q5.4,9.6 7.6,10.4 Q9,12 8,13.6 M10,2.6 Q9.4,5 11.6,5.6 Q13.4,6.6 13.6,8.4" fill="none" stroke="#c0505e" stroke-width="1.5"/></svg>
<svg width="16" height="16" viewBox="0 0 16 16" style="left:8px;top:208.7px"><g fill="none" stroke="#e6e6e6" stroke-width="1.2"><rect x="1.8" y="2.6" width="12.4" height="3.2"/><path d="M2.8,6 V13.6 H13.2 V6"/><path d="M6.2,8.8 h3.6" stroke-width="1.5"/></g></svg>
<svg width="16" height="16" viewBox="0 0 16 16" style="left:8px;top:243.5px"><g fill="none" stroke="#b8834e" stroke-width="1.1"><path d="M1.4,4.6 V1.6 H4.4 M11.6,1.6 H14.6 V4.6 M14.6,11.4 V14.4 H11.6 M4.4,14.4 H1.4 V11.4"/></g><rect x="4" y="4" width="8" height="8" fill="#e8953f"/></svg>
<svg width="16" height="16" viewBox="0 0 16 16" style="left:8px;top:269.3px"><path d="M2.2,13.8 L8.4,7.6 A3.6,3.6 0 0 1 12.6,2.6 L10.4,4.8 L11.2,6.6 L13,7.2 L15,5.2 A3.6,3.6 0 0 1 10.2,9.4 L4,15.4 Z" fill="#7fa8f2" transform="translate(-1,-1)"/></svg>
<svg width="16" height="16" viewBox="0 0 16 16" style="left:8px;top:295px"><g fill="#7088d2"><circle cx="3.6" cy="3.4" r="2"/><circle cx="12.6" cy="3.6" r="1.4"/><circle cx="12.8" cy="13" r="1.4"/><circle cx="3.8" cy="12.6" r="1.1"/></g><path d="M3.6,3.4 V12.4 M3.6,3.4 H12.6 M3.6,3.4 L12.8,13" stroke="#7088d2" stroke-width="1" fill="none"/></svg>
<svg width="16" height="16" viewBox="0 0 16 16" style="left:8px;top:321px"><circle cx="7.4" cy="8.6" r="5.2" fill="none" stroke="#7088d2" stroke-width="1.5"/><circle cx="7.4" cy="8.6" r="2" fill="#7088d2"/><circle cx="12.6" cy="3.2" r="1.7" fill="#7088d2"/></svg>
<svg width="16" height="16" viewBox="0 0 16 16" style="left:8px;top:347.5px"><g transform="rotate(-38 8 8)"><rect x="1" y="3.6" width="14" height="8.8" rx="4.4" fill="none" stroke="#7088d2" stroke-width="1.4"/><circle cx="5.6" cy="8" r="2.4" fill="none" stroke="#7088d2" stroke-width="1.3"/><circle cx="11.8" cy="8" r="1" fill="#7088d2"/></g></svg>
<svg width="16" height="16" viewBox="0 0 16 16" style="left:8px;top:373.6px"><g fill="none" stroke="#2bb383" stroke-width="1.3"><path d="M3,3.2 H13 L8,13 Z"/><circle cx="3" cy="3.2" r="1.8" fill="#1d1d1d"/><circle cx="13" cy="3.2" r="1.8" fill="#1d1d1d"/><circle cx="8" cy="13.2" r="1.8" fill="#1d1d1d"/></g></svg>
<svg width="16" height="16" viewBox="0 0 16 16" style="left:8px;top:399.5px"><circle cx="8" cy="8" r="6" fill="#cf5866"/><path d="M8,2 A6,6 0 0 0 3,11.4 L8,8 Z" fill="#1d1d1d" opacity=".0"/><path d="M5.2,9.4 A3.4,3.4 0 0 0 11.6,8.8 L8.4,8.2 L8.6,4.6 A3.6,3.6 0 0 0 5.2,9.4 Z" fill="#2a2226"/></svg>
<svg width="16" height="16" viewBox="0 0 16 16" style="left:37px;top:33px"><g fill="none" stroke="#e6e6e6" stroke-width="1.2"><path d="M1,4.6 V1.6 H4.2 M11,1.6 H14.2 V4.6 M14.2,10.6 V13.8 H11 M4.2,13.8 H1 V10.6"/></g><rect x="3.8" y="4.2" width="7.6" height="7.2" fill="#efefef"/></svg>
<div class="t sh" style="left:59.5px;top:34px">Plane.001</div>
<svg width="6" height="9" style="left:124.6px;top:37px"><use href="#chr"/></svg>
<svg width="16" height="16" viewBox="0 0 16 16" style="left:138.5px;top:33px"><g fill="none" stroke="#d8d8d8" stroke-width="1.1"><rect x="1" y="5.6" width="2.8" height="7.8" rx=".6" stroke="#9a9a9a"/><rect x="6" y="3.6" width="3" height="8.4" rx=".6"/><rect x="11.2" y="1.8" width="3.2" height="8.6" rx=".6"/></g></svg>
<div class="t sh" style="left:161px;top:34px">Array</div>
<svg width="16" height="16" viewBox="0 0 16 16" style="left:252.5px;top:33px"><path d="M9.6,1.8 L14.2,6.4 L12.6,7 L10.2,9.6 L10,12.4 L3.6,6 L6.4,5.8 L9,3.4 Z M6.8,9.2 L2,14" fill="none" stroke="#c8c8c8" stroke-width="1.1" stroke-linejoin="round"/></svg>
<div class="fld" style="left:36.5px;top:66px;width:232.5px;height:17.2px;border-radius:4px"></div>
<svg width="10" height="10" viewBox="0 0 10 10" style="left:41.6px;top:69.6px"><path d="M5,0.8 V9.2 M0.8,5 H9.2" stroke="#e8e8e8" stroke-width="1.1"/></svg>
<div class="t sh" style="left:130.5px;top:67.5px;letter-spacing:-.1px">Add Modifier</div>
<div class="abs" style="left:36px;top:94.3px;width:233.3px;height:290.6px;background:#3a3a3a;border:1px solid #3f5c92;border-radius:4px"></div>
<div class="abs" style="left:37px;top:197.4px;width:231.3px;height:70.2px;background:#333333"></div>
<svg width="10" height="6" style="left:43px;top:104px"><use href="#chvt"/></svg>
<svg width="16" height="16" viewBox="0 0 16 16" style="left:56.5px;top:97.6px"><g fill="none" stroke="#d8d8d8" stroke-width="1.1"><rect x="1" y="5.6" width="2.8" height="7.8" rx=".6" stroke="#9a9a9a"/><rect x="6" y="3.6" width="3" height="8.4" rx=".6"/><rect x="11.2" y="1.8" width="3.2" height="8.6" rx=".6"/></g></svg>
<div class="abs" style="left:82px;top:98.3px;width:46.5px;height:15.6px;background:#1f1f1f;border-radius:4px 0 0 4px"></div>
<div class="t sh" style="left:88px;top:99.2px">Array</div>
<div class="abs" style="left:128.5px;top:98.3px;width:19px;height:15.6px;background:#585858"></div>
<svg width="15" height="15" viewBox="0 0 15 15" style="left:130.6px;top:99px;stroke:#ececec"><g fill="none" stroke-width="1.1"><path d="M2.6,2.6 H11.4 L7,11.6 Z"/><circle cx="2.6" cy="2.6" r="1.6" fill="#585858"/><circle cx="11.4" cy="2.6" r="1.6" fill="#585858"/><circle cx="7" cy="12" r="1.6" fill="#585858"/></g></svg>
<div class="abs" style="left:147.5px;top:98.3px;width:55.5px;height:15.6px;background:#4772b3"></div>
<div class="abs" style="left:165.6px;top:98.3px;width:1px;height:15.6px;background:#3a5f99"></div><div class="abs" style="left:184.2px;top:98.3px;width:1px;height:15.6px;background:#3a5f99"></div>
<svg width="16" height="16" viewBox="0 0 16 16" style="left:148.8px;top:98.2px"><g fill="none" stroke="#fff" stroke-width="1"><path d="M3,4 V12 H11 M5,3 H9.6"/><rect x="1.4" y="1.4" width="3" height="3" fill="#4772b3"/><rect x="1.4" y="10.8" width="3" height="3" fill="#4772b3"/><rect x="9.8" y="10.8" width="3" height="3" fill="#4772b3"/></g><rect x="9.4" y="1" width="4.4" height="4.4" fill="#fff"/></svg>
<svg width="16" height="16" viewBox="0 0 16 16" style="left:167px;top:98.2px"><rect x="2" y="2.6" width="12" height="8" rx="1" fill="none" stroke="#fff" stroke-width="1.3"/><rect x="4" y="4.6" width="8" height="4" fill="#fff"/><path d="M8,10.6 V13 M4.6,13.2 H11.4" stroke="#fff" stroke-width="1.3"/></svg>
<svg width="14" height="12" viewBox="0 0 14 12" style="left:187px;top:100px"><path d="M0.6,3 h2.6 l1,-1.8 h4.8 l1,1.8 h2.6 v8 h-12z" fill="#fff"/><circle cx="6.6" cy="6.8" r="3.1" fill="#4772b3"/><circle cx="6.6" cy="6.8" r="2.1" fill="#fff"/><circle cx="6.6" cy="6.8" r="1" fill="#4772b3"/></svg>
<div class="abs" style="left:203px;top:98.3px;width:18.5px;height:15.6px;background:#282828;border-radius:0 4px 4px 0"></div>
<svg width="8" height="5" style="left:208.6px;top:104px"><use href="#chv"/></svg>
<svg width="10" height="10" viewBox="0 0 10 10" style="left:227.4px;top:101px"><path d="M1.2,1.2 L8.8,8.8 M8.8,1.2 L1.2,8.8" stroke="#e4e4e4" stroke-width="1.2"/></svg>
<svg width="12" height="6" viewBox="0 0 12 6" style="left:250px;top:104px"><g fill="#666"><rect x="0" y="0" width="1.3" height="1.3"/><rect x="3" y="0" width="1.3" height="1.3"/><rect x="6" y="0" width="1.3" height="1.3"/><rect x="9" y="0" width="1.3" height="1.3"/><rect x="0" y="3" width="1.3" height="1.3"/><rect x="3" y="3" width="1.3" height="1.3"/><rect x="6" y="3" width="1.3" height="1.3"/><rect x="9" y="3" width="1.3" height="1.3"/></g></svg>
<div class="t sh" style="right:157.6px;top:126.7px;text-align:right">Fit Type</div>
<div class="btn" style="left:128.4px;top:126px;width:114px;height:16px;background:#282828"></div>
<div class="t sh" style="left:134.6px;top:126.8px">Fixed Count</div>
<svg width="8" height="5" style="left:233.2px;top:132.2px"><use href="#chv"/></svg>
<div class="abs" style="left:250.5px;top:131.9px;width:4px;height:4px;border-radius:50%;background:#e8e8e8"></div>
<div class="t sh" style="right:157.6px;top:150.2px;text-align:right">Count</div>
<div class="fld" style="left:128.4px;top:149.2px;width:114px;height:16.4px;border-radius:4px"></div>
<div class="t sh" style="left:128.4px;top:150.2px;width:114px;text-align:center">4</div>
<div class="abs" style="left:250.5px;top:155.4px;width:4px;height:4px;border-radius:50%;background:#e8e8e8"></div>
<svg width="10" height="6" style="left:56.4px;top:183.6px"><use href="#chvt"/></svg>
<div class="abs" style="left:68.2px;top:180.4px;width:11.4px;height:11.4px;background:#4772b3;border-radius:2px"></div>
<svg width="12" height="12" viewBox="0 0 12 12" style="left:68.2px;top:180.4px"><path d="M2.6,6 L5,8.4 L9.4,3.2" fill="none" stroke="#fff" stroke-width="1.4"/></svg>
<div class="t sh" style="left:84px;top:178.8px;letter-spacing:-.12px">Relative Offset</div>
<div class="fld" style="left:128.4px;top:206.2px;width:114px;height:17.3px;border-radius:4px 4px 0 0"></div>
<div class="t sh" style="left:128.4px;top:207.4px;width:114px;text-align:center">0.500</div>
<div class="t sh" style="right:157.6px;top:207.4px;text-align:right">Factor X</div>
<div class="abs" style="left:250.5px;top:212.6px;width:4px;height:4px;border-radius:50%;background:#e8e8e8"></div>
<div class="fld" style="left:128.4px;top:224.65px;width:114px;height:17.3px;border-radius:0"></div>
<div class="t sh" style="left:128.4px;top:225.85px;width:114px;text-align:center">-0.500</div>
<div class="t sh" style="right:157.6px;top:225.85px;text-align:right">Y</div>
<div class="abs" style="left:250.5px;top:231.05px;width:4px;height:4px;border-radius:50%;background:#e8e8e8"></div>
<div class="fld" style="left:128.4px;top:243.1px;width:114px;height:17.3px;border-radius:0 0 4px 4px"></div>
<div class="t sh" style="left:128.4px;top:244.3px;width:114px;text-align:center">0.000</div>
<div class="t sh" style="right:157.6px;top:244.3px;text-align:right">Z</div>
<div class="abs" style="left:250.5px;top:249.5px;width:4px;height:4px;border-radius:50%;background:#e8e8e8"></div>
<svg width="6" height="9" style="left:58px;top:276.6px"><use href="#chr"/></svg>
<div class="abs" style="left:68.2px;top:274.9px;width:11.4px;height:11.4px;background:#545454;border-radius:2px"></div>
<div class="t sh" style="left:84px;top:273.6px;letter-spacing:-.1px">Constant Offset</div>
<svg width="6" height="9" style="left:58px;top:300.0px"><use href="#chr"/></svg>
<div class="abs" style="left:68.2px;top:298.3px;width:11.4px;height:11.4px;background:#545454;border-radius:2px"></div>
<div class="t sh" style="left:84px;top:297.0px;letter-spacing:-.1px">Object Offset</div>
<svg width="6" height="9" style="left:58px;top:323.4px"><use href="#chr"/></svg>
<div class="abs" style="left:68.2px;top:321.7px;width:11.4px;height:11.4px;background:#545454;border-radius:2px"></div>
<div class="t sh" style="left:84px;top:320.4px;letter-spacing:-.1px">Merge</div>
<svg width="6" height="9" style="left:58px;top:346.8px"><use href="#chr"/></svg>
<div class="t sh" style="left:69.5px;top:343.8px">UVs</div>
<svg width="6" height="9" style="left:58px;top:370.4px"><use href="#chr"/></svg>
<div class="t sh" style="left:69.5px;top:367.4px">Caps</div>
<div class="edge" style="bottom:-2px;right:-2px"></div>
</div>
</body></html>
